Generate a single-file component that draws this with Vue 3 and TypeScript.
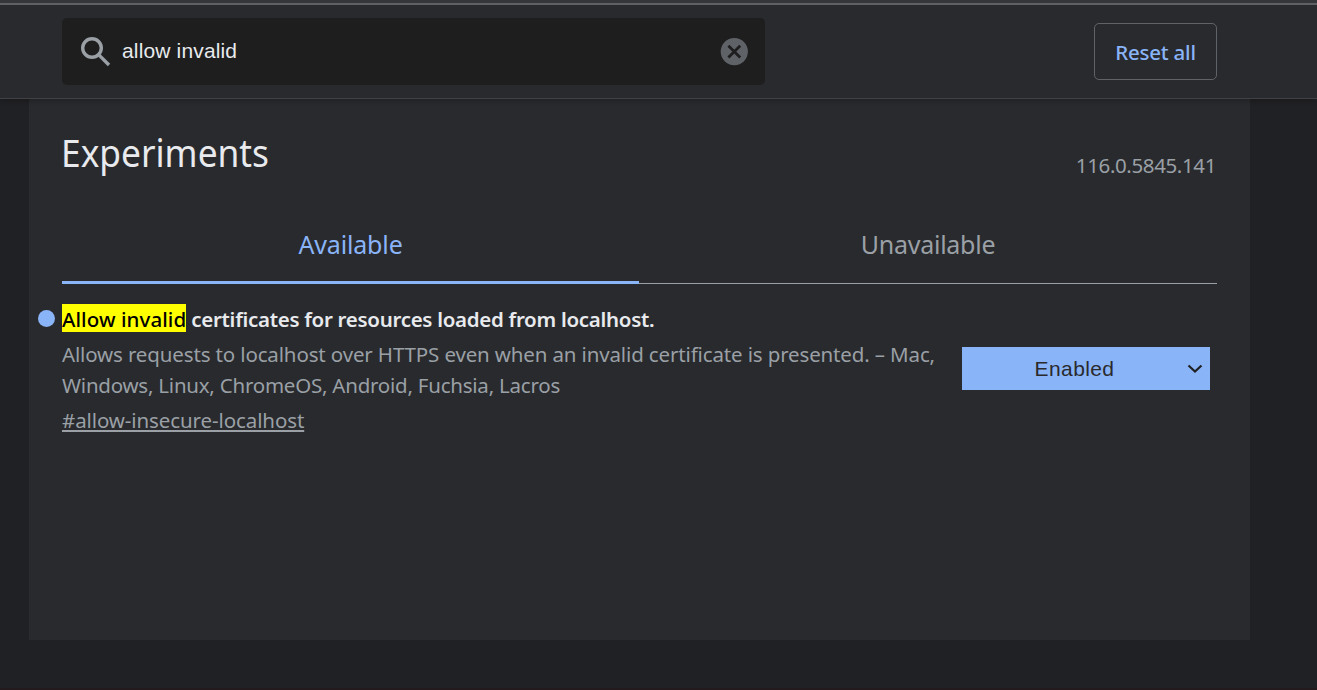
<script setup lang="ts">
import { ref } from 'vue'

interface Experiment {
  match: string
  title: string
  description: string[]
  id: string
  state: string
}

const query = ref<string>('allow invalid')
const version = '116.0.5845.141'
const experiments: Experiment[] = [
  {
    match: 'Allow invalid',
    title: ' certificates for resources loaded from localhost.',
    description: [
      'Allows requests to localhost over HTTPS even when an invalid certificate is presented. – Mac,',
      'Windows, Linux, ChromeOS, Android, Fuchsia, Lacros',
    ],
    id: 'allow-insecure-localhost',
    state: 'Enabled',
  },
]
</script>

<template>
  <div class="page">
    <header class="toolbar">
      <div class="search">
        <svg class="search-icon" width="30" height="30" viewBox="0 0 30 30">
          <circle cx="11" cy="11" r="9.3" />
          <path d="M17.6 17.6 L28 28" />
        </svg>
        <span class="query">{{ query }}</span>
        <svg class="clear" width="28" height="28" viewBox="0 0 28 28">
          <circle cx="14.3" cy="13.6" r="13.6" />
          <path d="M8.4 7.7 L20.2 19.5 M20.2 7.7 L8.4 19.5" />
        </svg>
      </div>
      <button class="reset"><span>Reset all</span></button>
    </header>
    <main class="content">
      <div class="heading">
        <h1><span>Experiments</span></h1>
        <span class="version">{{ version }}</span>
      </div>
      <nav class="tabs">
        <div class="tab active"><span>Available</span></div>
        <div class="tab"><span>Unavailable</span></div>
      </nav>
      <section v-for="item in experiments" :key="item.id" class="experiment">
        <div class="dot"></div>
        <div class="text">
          <h2><mark>{{ item.match }}</mark><span class="rest">{{ item.title }}</span></h2>
          <p><span v-for="(line, i) in item.description" :key="i" :class="['line', 'line-' + i]">{{ line }}</span></p>
          <a class="permalink">#{{ item.id }}</a>
        </div>
        <div class="select">
          <span>{{ item.state }}</span>
          <svg width="16" height="10" viewBox="0 0 16 10"><path d="M1.5 1.5 L8 7.6 L14.5 1.5" /></svg>
        </div>
      </section>
    </main>
  </div>
</template>

<style>
body {
  margin: 0;
  background: #202124;
}
</style>

<style scoped>
.page {
  box-sizing: border-box;
  height: 690px;
  overflow: hidden;
  background: #202124;
  border-bottom: 2px solid #231a1e;
  font-family: "Noto Sans", "Open Sans", sans-serif;
  color: #e8eaed;
}
.toolbar {
  box-sizing: border-box;
  height: 99px;
  padding: 13px 100px 0 62px;
  display: flex;
  justify-content: space-between;
  align-items: flex-start;
  background: linear-gradient(#35363a 3px, #5f6063 3px, #5f6063 5px, #292a2d 5px);
  border-bottom: 1px solid #3f4144;
  box-shadow: 0 2px 5px rgba(0, 0, 0, 0.22);
  position: relative;
}
.search {
  box-sizing: border-box;
  width: 703px;
  height: 67px;
  margin-top: 5px;
  padding: 0 17px 0 19px;
  display: flex;
  align-items: center;
  background: #1e1e1f;
  border-radius: 5px;
}
.search-icon {
  fill: none;
  stroke: #9aa0a6;
  stroke-width: 3.4;
}
.query {
  flex: 1;
  margin: 0 0 2px 11px;
  font: 21px/28px "Liberation Sans", Arial, sans-serif;
  letter-spacing: 0.15px;
}
.clear {
  fill: #5f6368;
}
.clear path {
  stroke: #1e1e1f;
  stroke-width: 2.8;
}
.reset {
  box-sizing: border-box;
  width: 123px;
  height: 57px;
  margin-top: 10px;
  padding: 0;
  background: none;
  border: 1px solid #5f6368;
  border-radius: 5px;
  color: #8ab4f8;
  font: 500 20.5px/30px "Noto Sans", sans-serif;
  letter-spacing: -0.22px;
  white-space: nowrap;
}
.content {
  box-sizing: border-box;
  width: 1221px;
  height: 541px;
  margin-left: 29px;
  padding: 0 33px;
  background: #292a2d;
}
.heading {
  height: 110px;
  display: flex;
  justify-content: space-between;
}
h1 {
  margin: 25px 0 0 -1px;
  font-size: 38.5px;
  font-weight: 400;
  line-height: 56px;
}
h1 span {
  display: inline-block;
  transform: scaleX(0.917);
  transform-origin: 0 0;
}
.version {
  margin: 51px 1px 0 0;
  font-size: 20.5px;
  line-height: 30px;
  letter-spacing: -0.38px;
  color: #9aa0a6;
}
.tabs {
  display: flex;
  height: 75px;
}
.tab {
  box-sizing: border-box;
  width: 578px;
  padding-top: 17px;
  text-align: center;
  font-size: 25px;
  line-height: 36px;
  letter-spacing: -0.25px;
  color: #9aa0a6;
  border-bottom: 1px solid #9aa0a6;
}
.tab.active {
  width: 577px;
  letter-spacing: -0.15px;
  color: #8ab4f8;
  border-bottom: 3px solid #8ab4f8;
}
.experiment {
  display: flex;
  margin: 18px 7px 0 -24px;
}
.dot {
  width: 17px;
  height: 17px;
  margin: 8px 7px 0 0;
  border-radius: 50%;
  background: #8ab4f8;
  flex: none;
}
.text {
  width: 900px;
  flex: none;
  white-space: nowrap;
}
h2 {
  height: 28px;
  margin: 2px 0 0;
  font-size: 20.5px;
  line-height: 30px;
  font-weight: 600;
  white-space: pre;
}
mark {
  display: inline-block;
  height: 28px;
  background: #ff0;
  color: #000;
  font-weight: 500;
  letter-spacing: 0.08px;
}
.rest {
  letter-spacing: -0.29px;
}
p {
  margin: 7px 0 0;
  color: #9aa0a6;
  font-size: 20.5px;
  line-height: 31px;
}
.line {
  display: table;
  letter-spacing: -0.14px;
}
.line-1 {
  letter-spacing: -0.23px;
}
.permalink {
  display: inline-block;
  margin-top: 4px;
  font-size: 20.5px;
  line-height: 31px;
  letter-spacing: -0.1px;
  color: #9aa0a6;
  text-decoration: underline;
  text-decoration-thickness: 2px;
  text-underline-offset: 2px;
}
.select {
  box-sizing: border-box;
  width: 248px;
  height: 43px;
  margin-top: 45px;
  padding: 0 7px 0 0;
  display: flex;
  align-items: center;
  background: #8ab4f8;
  color: #292a2d;
  font: 21px/28px "Liberation Sans", Arial, sans-serif;
}
.select span {
  flex: 1;
  text-align: center;
  letter-spacing: 0.4px;
}
.select svg {
  fill: none;
  stroke: #202124;
  stroke-width: 2.2;
}
</style>
